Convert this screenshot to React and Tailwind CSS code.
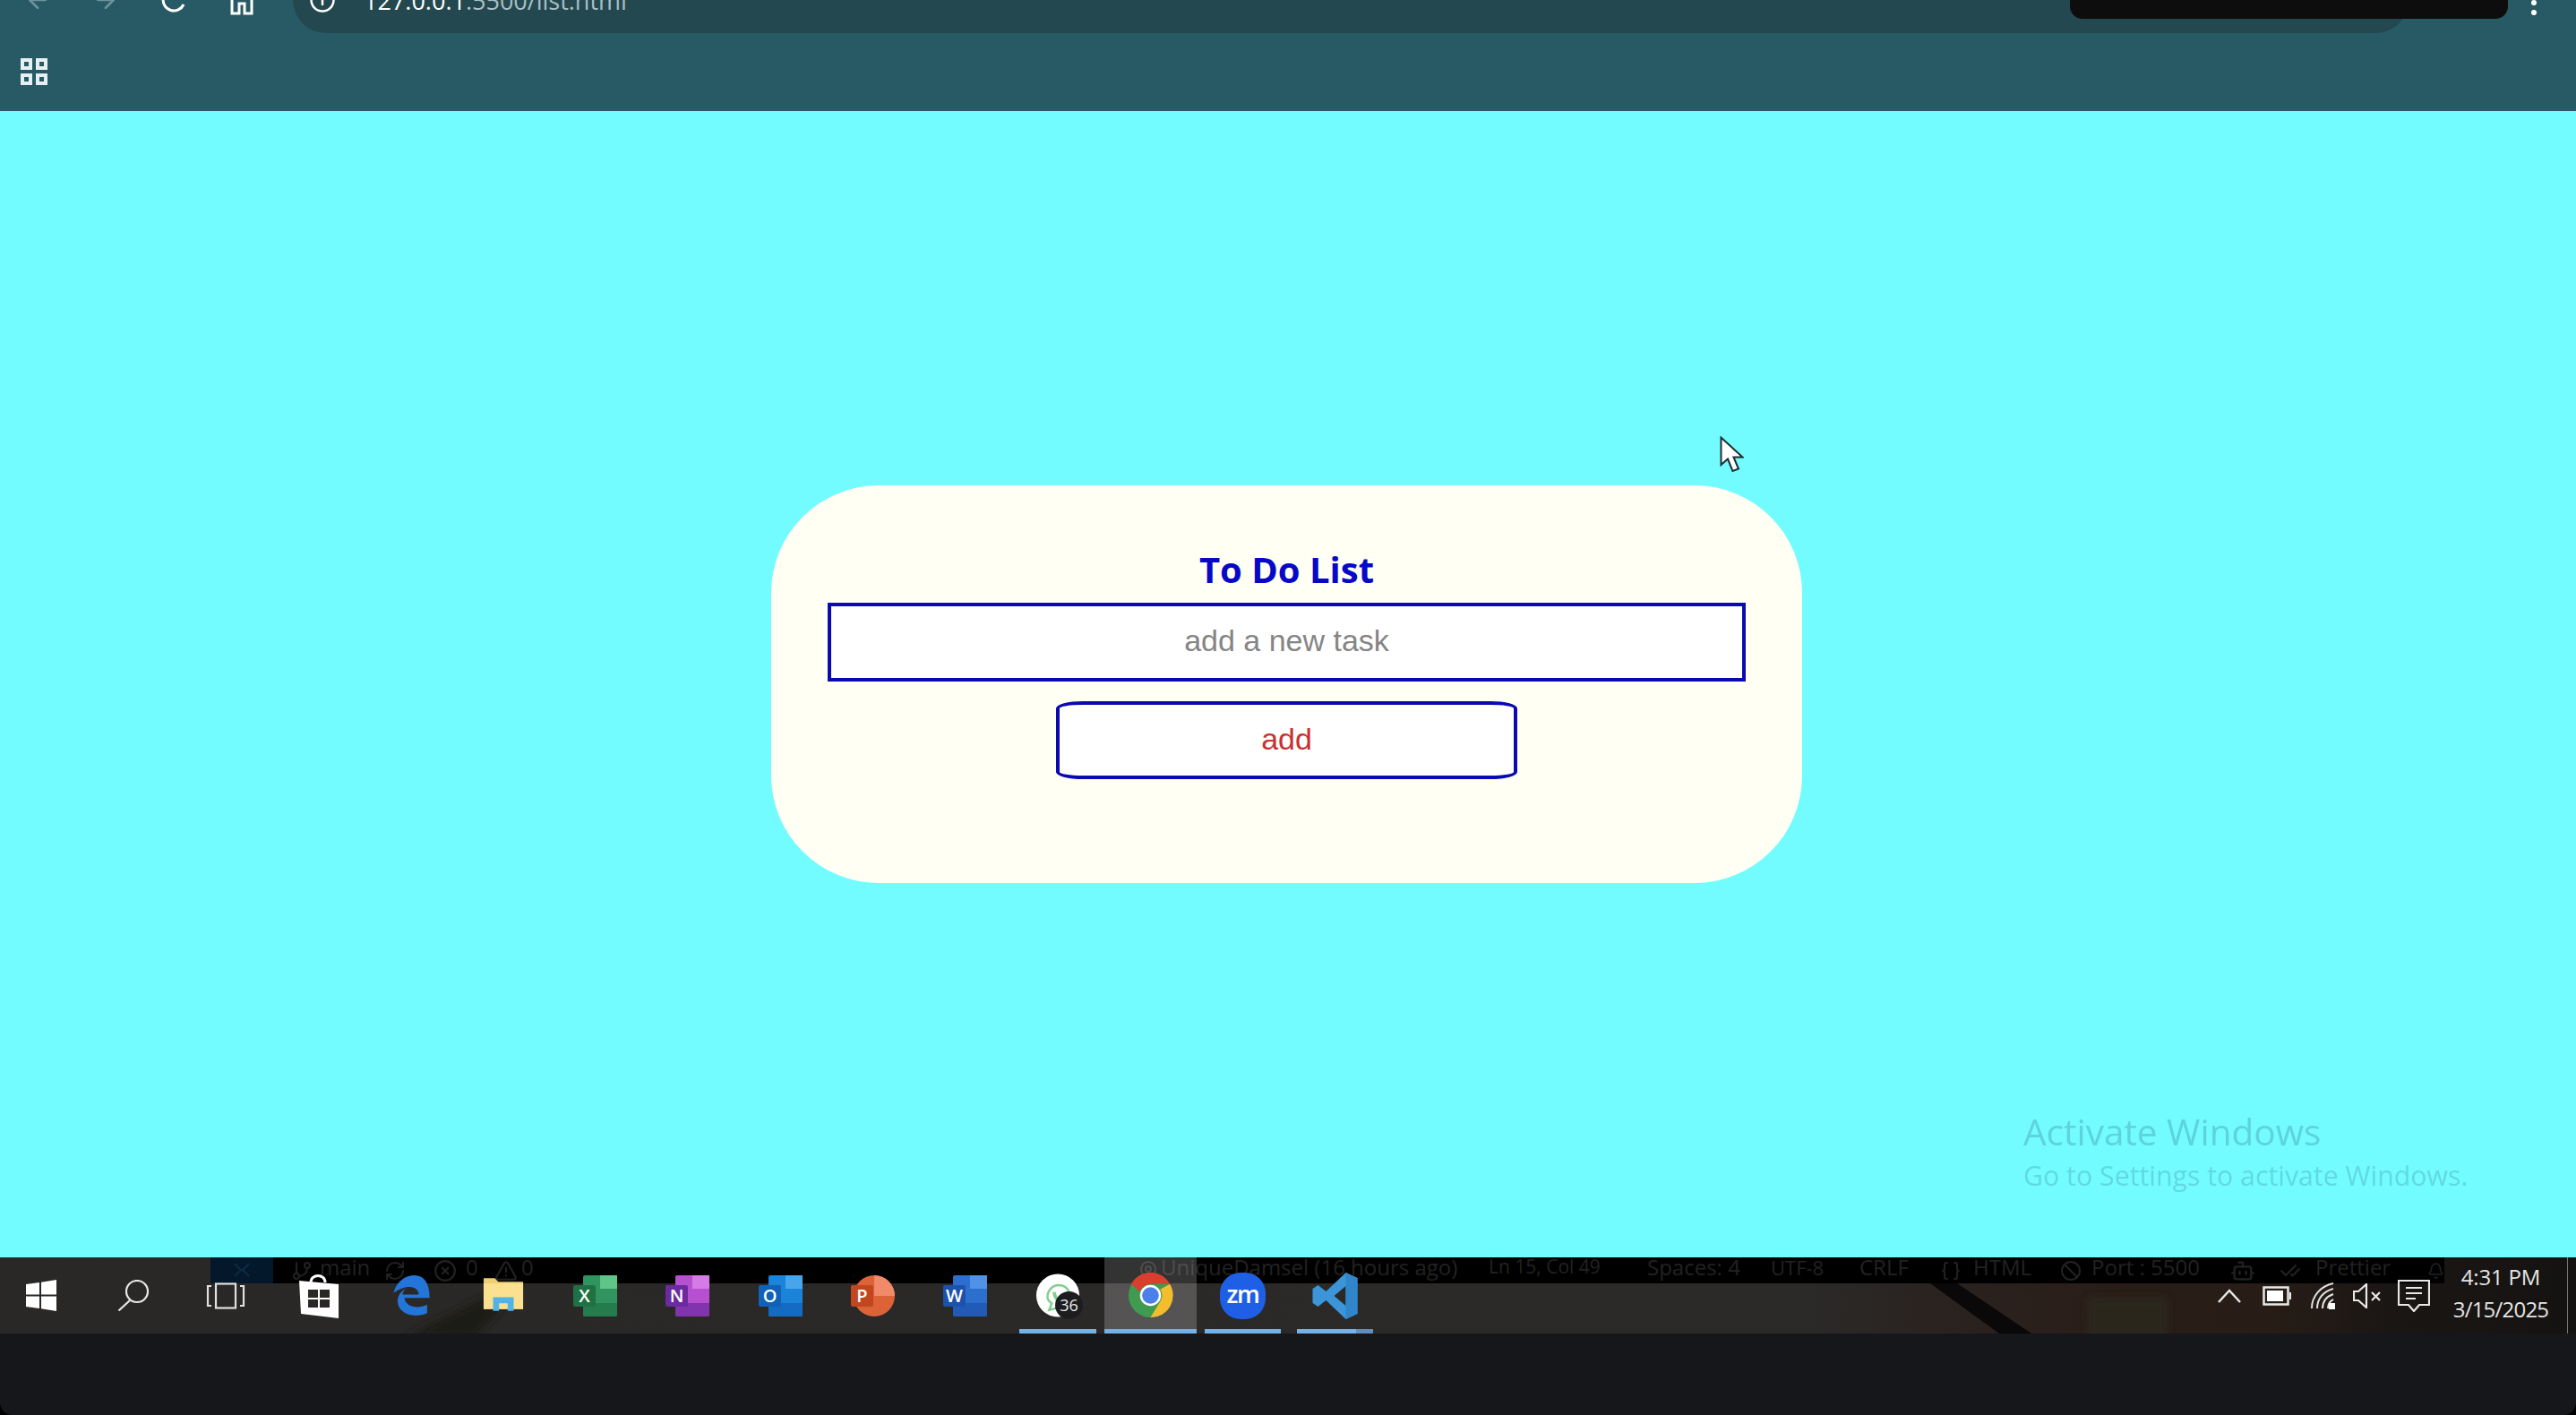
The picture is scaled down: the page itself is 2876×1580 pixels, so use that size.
import { ArrowLeft, ArrowRight, Info, GitBranch, RefreshCw, MapPin, Braces, Ban, Bot, CheckCheck, Bell, CircleX, TriangleAlert } from 'lucide-react';

const sans = 'font-["Open_Sans",sans-serif]';

function WinLogo() {
  return (
    <svg width="34" height="35" viewBox="0 0 34 35" fill="#fff">
      <path d="M0 5 15 3V16.5H0ZM17 2.7 34 0V16.5H17ZM0 18.5H15V32L0 30ZM17 18.5H34V35L17 32.3Z" />
    </svg>
  );
}

function SearchIcon() {
  return (
    <svg width="36" height="35" viewBox="0 0 36 35" fill="none" stroke="#e8e8e8" strokeWidth="2.2">
      <circle cx="22" cy="13" r="12" />
      <path d="M14 23 1.5 34.5" />
    </svg>
  );
}

function TaskView() {
  return (
    <svg width="44" height="30" viewBox="0 0 44 30" fill="none" stroke="#e0e0e0" strokeWidth="2.2">
      <rect x="11" y="1.5" width="22" height="27" />
      <path d="M6 4H2V26H6M38 4H42V26H38" />
    </svg>
  );
}

function StoreIcon() {
  return (
    <svg width="44" height="50" viewBox="0 0 44 50">
      <path d="M13 10C13 0 29 0 29 10" fill="none" stroke="#fff" strokeWidth="3" />
      <path d="M0 8 44 12V50L2 45Z" fill="#fff" />
      <path d="M10 18H21V27H10ZM23 18H34V27H23ZM10 29H21V38H10ZM23 29H34V38H23Z" fill="#2a2826" />
    </svg>
  );
}

function EdgeIcon() {
  return (
    <svg width="44" height="47" viewBox="0 0 46 50">
      <path d="M2 22C6 8 16 1 27 1 38 1 45 10 45 28H15C16 38 30 42 42 36V46C26 53 6 47 7 30 8 24 12 19 18 16 14 19 13 22 13 24H32C32 15 20 10 2 22Z" fill="#2376d8" />
    </svg>
  );
}

function ExplorerIcon() {
  return (
    <svg width="46" height="39" viewBox="0 0 48 40">
      <path d="M1 0H14L18 4H47V36H1Z" fill="#f0cf72" />
      <path d="M1 6H47V36H1Z" fill="#fbe08f" />
      <path d="M12 38V22H36V38H29V29H19V38Z" fill="#50b4e8" />
    </svg>
  );
}

// office apps share one shape: coloured sheet with a darker letter tile on the left
function OfficeIcon({ letter, dark, light, mid, shape = 'sheet' }) {
  return (
    <svg width="52" height="46" viewBox="0 0 52 46">
      {shape === 'round' ? (
        <>
          <circle cx="27" cy="23" r="23" fill={mid} />
          <path d="M27 0A23 23 0 0 1 50 23H27Z" fill={light} />
        </>
      ) : (
        <>
          <rect x="12" y="0" width="38" height="46" rx="2" fill={mid} />
          <rect x="31" y="0" width="19" height="15" fill={light} />
          <rect x="12" y="31" width="38" height="15" fill={dark} opacity="0.7" />
        </>
      )}
      <rect x="1" y="11" width="25" height="24" rx="2" fill={dark} />
      <text x="13.5" y="30" textAnchor="middle" fontSize="20" fontWeight="600" fill="#fff" fontFamily="Open Sans, sans-serif">{letter}</text>
    </svg>
  );
}

function WhatsappIcon() {
  return (
    <div className="relative w-[50px] h-[51px]">
      <svg width="50" height="51" viewBox="0 0 52 52">
        <circle cx="26" cy="26" r="25" fill="#fff" />
        <path d="M14 28C14 20 20 14 27 14 35 14 40 20 40 27 40 34 34 40 27 40L16 43 19 35C16 33 14 31 14 28Z" fill="none" stroke="#7fcf8e" strokeWidth="2.5" />
        <path d="M22 22C22 30 28 33 33 33" fill="none" stroke="#7fcf8e" strokeWidth="4" />
      </svg>
      <span className={`absolute -right-[3px] -bottom-[1px] w-[31px] h-[31px] rounded-full bg-[#1d1d20] text-[#e8e8e8] text-[18px] leading-[31px] text-center ${sans}`}>36</span>
    </div>
  );
}

function ChromeIcon() {
  return (
    <svg width="51" height="51" viewBox="0 0 52 52">
      <circle cx="26" cy="26" r="25" fill="#3e9b4f" />
      <path d="M4 13A25 25 0 0 1 48 13H26A13 13 0 0 0 14 22Z" fill="#d93f2f" />
      <path d="M48 13A25 25 0 0 1 26 51L37 33A13 13 0 0 0 37 19Z" fill="#f3bd2e" />
      <circle cx="26" cy="26" r="12" fill="#fff" />
      <circle cx="26" cy="26" r="9.5" fill="#4a80e8" />
    </svg>
  );
}

function ZoomIcon() {
  return (
    <div className={`w-[51px] h-[52px] rounded-[23px] bg-[#1f5fe6] text-white text-[27px] font-semibold leading-[48px] text-center tracking-tighter ${sans}`}>zm</div>
  );
}

function VscodeIcon() {
  return (
    <svg width="51" height="52" viewBox="0 0 50 52">
      <path d="M37 0 50 6V46L37 52 15 31 6 38 0 34V18L6 14 15 21ZM37 15 24 26 37 37Z" fill="#3b95d8" />
      <path d="M37 0 50 6V46L37 52Z" fill="#2f86cb" />
    </svg>
  );
}

const apps = [
  { icon: <WinLogo /> },
  { icon: <SearchIcon /> },
  { icon: <TaskView /> },
  { icon: <StoreIcon /> },
  { icon: <EdgeIcon /> },
  { icon: <ExplorerIcon /> },
  { icon: <OfficeIcon letter="X" dark="#1f7144" light="#5fc589" mid="#2f9460" /> },
  { icon: <OfficeIcon letter="N" dark="#6b2aa0" light="#d67be6" mid="#b64fd0" /> },
  { icon: <OfficeIcon letter="O" dark="#0f62b8" light="#48a5ea" mid="#1c84d8" /> },
  { icon: <OfficeIcon letter="P" dark="#c2471f" light="#f08a68" mid="#dc6338" shape="round" /> },
  { icon: <OfficeIcon letter="W" dark="#1d52ac" light="#4f92e6" mid="#2d6fcd" /> },
  { icon: <WhatsappIcon />, bar: true },
  { icon: <ChromeIcon />, bar: true, active: true },
  { icon: <ZoomIcon />, bar: true },
  { icon: <VscodeIcon />, bar: true, split: true },
];

function TaskbarApp({ app }) {
  return (
    <div className={`relative w-[103.2px] h-full flex items-center justify-center ${app.active ? 'bg-white/20' : ''}`}>
      <div className="relative">{app.icon}</div>
      {app.bar && (
        <div className={`absolute bottom-0 h-[5px] flex bg-[#76b1e6] ${app.active ? 'left-0 right-0' : 'left-[9px] right-[9px]'}`}>
          {app.split && <div className="ml-auto w-[19px] bg-[#5f8fb8]" />}
        </div>
      )}
    </div>
  );
}

// status bar of the editor that shows through the translucent taskbar
function GhostStatus() {
  return (
    <div className={`absolute left-[235px] right-[147px] top-0 h-[29px] bg-black overflow-hidden flex items-center text-[24px] leading-none whitespace-nowrap text-[#222] ${sans}`}>
      <div className="w-[70px] h-full shrink-0 bg-[#03182a] flex items-center justify-center">
        <svg width="24" height="24" viewBox="0 0 24 24" fill="none" stroke="#0e2c44" strokeWidth="2"><path d="M4 4 11 11 4 18M20 4 13 11 20 18" /></svg>
      </div>
      <div className="w-[20px] shrink-0" />
      <div className="w-[32px] shrink-0"><GitBranch size={24} /></div>
      <span className="w-[72px] shrink-0 -mt-[8px]">main</span>
      <div className="w-[55px] shrink-0"><RefreshCw size={24} /></div>
      <div className="w-[36px] shrink-0"><CircleX size={26} /></div>
      <span className="w-[32px] shrink-0 -mt-[8px]">0</span>
      <div className="w-[30px] shrink-0"><TriangleAlert size={26} /></div>
      <span className="w-[688px] shrink-0 -mt-[8px]">0</span>
      <div className="w-[26px] shrink-0"><MapPin size={24} /></div>
      <span className="w-[366px] shrink-0 -mt-[8px]">UniqueDamsel (16 hours ago)</span>
      <span className="w-[177px] shrink-0 -mt-[8px] text-[21px]">Ln 15, Col 49</span>
      <span className="w-[138px] shrink-0 -mt-[8px]">Spaces: 4</span>
      <span className="w-[99px] shrink-0 -mt-[8px] text-[22px]">UTF-8</span>
      <span className="w-[90px] shrink-0 -mt-[8px]">CRLF</span>
      <div className="w-[37px] shrink-0"><Braces size={24} /></div>
      <span className="w-[97px] shrink-0 -mt-[8px]">HTML</span>
      <div className="w-[35px] shrink-0"><Ban size={24} /></div>
      <span className="w-[155px] shrink-0 -mt-[8px]">Port : 5500</span>
      <div className="w-[55px] shrink-0"><Bot size={28} /></div>
      <div className="w-[40px] shrink-0"><CheckCheck size={24} /></div>
      <span className="w-[125px] shrink-0 -mt-[8px]">Prettier</span>
      <Bell size={26} />
    </div>
  );
}

function Wallpaper() {
  return (
    <svg className="absolute inset-0 w-full h-full" viewBox="0 0 2876 85" preserveAspectRatio="none">
      <defs>
        <linearGradient id="wall">
          <stop offset="0" stopColor="#2a2826" />
          <stop offset="0.7" stopColor="#2b2a29" />
          <stop offset="0.75" stopColor="#2a2320" />
          <stop offset="0.82" stopColor="#2a1d18" />
          <stop offset="0.88" stopColor="#271d16" />
          <stop offset="0.93" stopColor="#1a1614" />
          <stop offset="1" stopColor="#151312" />
        </linearGradient>
        <filter id="soft" x="-20%" y="-50%" width="140%" height="200%"><feGaussianBlur stdDeviation="5" /></filter>
      </defs>
      <rect width="2876" height="85" fill="url(#wall)" />
      <g filter="url(#soft)">
        <path d="M450 90 540 45 570 45 530 90Z" fill="#1b1a19" />
        <path d="M2330 45H2420V95H2330Z" fill="#29261a" />
      </g>
      <path d="M2155 29H2185L2268 85H2232Z" fill="#0a0808" />
    </svg>
  );
}

function Taskbar() {
  return (
    <div className="relative h-[85px] shrink-0 overflow-hidden">
      <Wallpaper />
      <GhostStatus />
      <div className="relative h-full flex items-center">
        <div className="flex h-full -ml-[5.6px]">
          {apps.map((app, i) => <TaskbarApp key={i} app={app} />)}
        </div>
        <div className="ml-auto flex items-center h-full">
          <svg width="26" height="16" viewBox="0 0 26 16" fill="none" stroke="#e8e8e8" strokeWidth="2.5"><path d="M1 15 13 2 25 15" /></svg>
          <svg className="ml-[24px]" width="32" height="22" viewBox="0 0 32 22"><rect x="1.5" y="1.5" width="27" height="19" fill="none" stroke="#e8e8e8" strokeWidth="2.5" /><rect x="5" y="5" width="18" height="12" fill="#fff" /><rect x="30" y="7" width="2" height="8" fill="#e8e8e8" /></svg>
          <svg className="ml-[21px]" width="28" height="30" viewBox="0 0 28 30" fill="none" stroke="#e0e0e0" strokeWidth="2"><path d="M2 29C2 15 12 4 26 1M8 29C8 18 15 10 26 7M14 29C14 22 18 16 26 13M20 29C20 25 22 21 26 19" /><rect x="21" y="23" width="7" height="7" fill="#fff" stroke="none" /></svg>
          <svg className="ml-[20px]" width="32" height="28" viewBox="0 0 32 28" fill="none" stroke="#e8e8e8" strokeWidth="2.2"><path d="M1 9H6L15 1V27L6 19H1Z" /><path d="M21 10 30 19M30 10 21 19" /></svg>
          <svg className="ml-[18px]" width="36" height="36" viewBox="0 0 36 36" fill="none" stroke="#e8e8e8" strokeWidth="2.2"><path d="M1 1H35V28H24L18 35 12 28H1Z" /><path d="M9 9H27M9 15H27M9 21H20" /></svg>
          <div className={`ml-[15px] mb-[5px] w-[128px] flex flex-col items-center text-[#e4e4e4] text-[24px] leading-[36px] tracking-[-0.8px] ${sans}`}>
            <span className="tracking-[-0.2px]">4:31 PM</span>
            <span>3/15/2025</span>
          </div>
          <div className="ml-[10px] w-[1px] h-full bg-[#777]" />
          <div className="w-[9px]" />
        </div>
      </div>
    </div>
  );
}

function Toolbar() {
  return (
    <div className="relative h-[124px] shrink-0 bg-[#285a65] overflow-hidden">
      <div className="h-[74px] -mt-[37px] flex items-center">
        <div className="w-[327px] flex items-center">
          <ArrowLeft className="ml-[27px] text-[#6d939b]" size={30} />
          <ArrowRight className="ml-[46px] text-[#6d939b]" size={30} />
          <svg className="ml-[46px]" width="30" height="30" viewBox="0 0 30 30" fill="none" stroke="#fff" strokeWidth="3"><path d="M26 20A12 12 0 1 1 15 3" /></svg>
          <svg className="ml-[47px]" width="28" height="36" viewBox="0 0 28 36" fill="none" stroke="#fff" strokeWidth="3"><path d="M3 0V33H11V22H17V33H25V0" /></svg>
        </div>
        <div className="w-[2362px] h-full rounded-[37px] bg-[#234850] flex items-center">
          <Info className="ml-[18px] text-white" size={30} />
          <span className={`ml-[31px] mt-[2px] text-[27px] text-[#a9bfc3] ${sans}`}><span className="text-white">127.0.0.1</span>:5500/list.html</span>
        </div>
        <div className="ml-[137px] flex flex-col gap-[5px] mt-[17px]">
          <span className="w-[6px] h-[6px] rounded-full bg-white" />
          <span className="w-[6px] h-[6px] rounded-full bg-white" />
        </div>
      </div>
      {/* redacted profile pill covering the top of the toolbar */}
      <div className="absolute left-[2311px] top-0 w-[489px] h-[21px] rounded-b-[14px] bg-[#0d0d0d]" />
      <svg className="ml-[23px] mt-[28px]" width="30" height="30" viewBox="0 0 30 30" fill="none" stroke="#e6f0f2" strokeWidth="4">
        <rect x="2" y="2" width="9" height="9" />
        <rect x="19" y="2" width="9" height="9" />
        <rect x="2" y="19" width="9" height="9" />
        <rect x="19" y="19" width="9" height="9" />
      </svg>
    </div>
  );
}

export default function App() {
  return (
    <div className="w-[2876px] h-[1580px] flex flex-col bg-black overflow-hidden">
      <Toolbar />

      <main className="relative flex-1 bg-[#72fcff] flex items-center justify-center pr-[3px]">
        <div className="w-[1151px] rounded-[120px] bg-[#fffff3] flex flex-col items-center pt-[64px] pb-[116px]">
          <h1 className={`h-[60px] leading-[60px] text-[40px] font-bold text-[#0808c8] mb-[7px] ${sans}`}>To Do List</h1>
          <input
            placeholder="add a new task"
            className='w-[1025px] h-[88px] pb-[3px] border-[4px] border-[#0a0ab0] bg-white text-center text-[34px] font-["Liberation_Sans",sans-serif] placeholder:text-[#858585] outline-none'
          />
          <button className='mt-[22px] w-[515px] h-[87px] pb-[2px] border-[4px] border-[#0a0ab0] rounded-[30px/8px] bg-white text-[34px] text-[#c93030] font-["Liberation_Sans",sans-serif]'>add</button>
        </div>

        {/* mouse pointer */}
        <svg className="absolute left-[1920px] top-[363px]" width="27" height="41" viewBox="0 0 27 41" fill="#fff" stroke="#1f2f33" strokeWidth="2">
          <path d="M1.5 1.5V32L9 25.5 14.5 39 21 36.5 15.5 23.5H25.5Z" />
        </svg>

        <div className={`absolute left-[2259px] top-[1114px] blur-[0.7px] ${sans}`}>
          <p className="text-[40.5px] leading-[52px] text-[#5fd3dc]">Activate Windows</p>
          <p className="text-[30.3px] leading-[46px] text-[#62d9e2]">Go to Settings to activate Windows.</p>
        </div>
      </main>

      <Taskbar />

      <div className="h-[91px] shrink-0 bg-[#15171b] rounded-b-[14px]" />
    </div>
  );
}
